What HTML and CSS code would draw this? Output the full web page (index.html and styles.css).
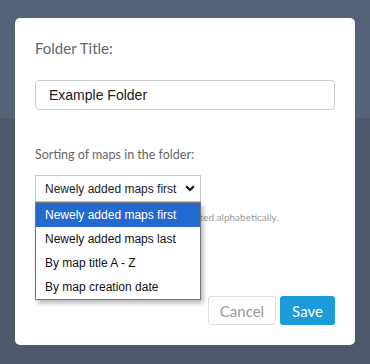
FILE: index.html
```html
<!DOCTYPE html>
<html lang="en">
<head>
    <meta charset="UTF-8">
    <meta name="viewport" content="width=device-width, initial-scale=1.0">
    <title>Edit Folder</title>
    <link rel="stylesheet" href="styles.css">
</head>
<body>
    <div class="modal">
        <label class="field-label" for="folderTitle">Folder Title:</label>
        <input type="text" id="folderTitle" class="text-input" value="Example Folder">

        <div class="field-label sort-label">Sorting of maps in the folder:</div>
        <div class="select-wrap">
            <div class="select-box">
                <span>Newely added maps first</span>
                <svg class="chevron" width="10" height="7" viewBox="0 0 10 7">
                    <polyline points="1.2,1.2 5,5 8.8,1.2" fill="none" stroke="#111" stroke-width="2.2"/>
                </svg>
            </div>
            <ul class="options">
                <li class="selected">Newely added maps first</li>
                <li>Newely added maps last</li>
                <li>By map title A - Z</li>
                <li>By map creation date</li>
            </ul>
        </div>
        <p class="hint">Subfolders are always shown first, sorted alphabetically.</p>

        <div class="actions">
            <button type="button" class="btn btn-cancel">Cancel</button>
            <button type="button" class="btn btn-save">Save</button>
        </div>
    </div>
</body>
</html>
```

FILE: styles.css
```css
body {
    margin: 0;
    height: 364px;
    overflow: hidden;
    background: linear-gradient(#566277 0, #566277 118px, #4d586a 118px);
    font-family: "Liberation Sans", Arial, sans-serif;
}
.modal {
    box-sizing: border-box;
    width: 340px;
    height: 327px;
    margin: 18px 15px 0;
    padding: 20px 20px 20px;
    background-color: #fff;
    border-radius: 5px;
    display: flex;
    flex-direction: column;
}
.field-label {
    display: block;
    font-family: Lato, "Open Sans", sans-serif;
    font-size: 15px;
    line-height: 20px;
    color: #666;
}
.text-input {
    box-sizing: border-box;
    width: 300px;
    height: 30px;
    margin-top: 22px;
    padding: 0 13px;
    border: 1px solid #ccc;
    border-radius: 4px;
    font-family: "Liberation Sans", Arial, sans-serif;
    font-size: 14px;
    color: #222;
    outline: none;
}
.sort-label {
    margin-top: 36px;
    font-size: 12.5px;
    line-height: 18px;
}
.select-wrap {
    position: relative;
    width: 166px;
    margin-top: 11px;
}
.select-box {
    box-sizing: border-box;
    height: 27px;
    padding: 0 5px 0 9px;
    border: 1px solid #c8c8c8;
    display: flex;
    align-items: center;
    justify-content: space-between;
    font-size: 12px;
    white-space: nowrap;
    color: #222;
}
.options {
    position: absolute;
    top: 27px;
    left: 0;
    width: 166px;
    box-sizing: border-box;
    margin: 0;
    padding: 0;
    list-style: none;
    background-color: #fff;
    border: 1px solid #767676;
    box-shadow: 2px 3px 5px rgba(0, 0, 0, 0.3);
    z-index: 2;
}
.options li {
    height: 24px;
    line-height: 24px;
    padding-left: 9px;
    font-size: 12px;
    white-space: nowrap;
    color: #111;
}
.options li.selected {
    background-color: #2369d0;
    color: #fff;
}
.hint {
    margin: 9px 0 0;
    font-family: Lato, "Open Sans", sans-serif;
    font-size: 10px;
    line-height: 12px;
    color: #999;
}
.actions {
    margin-top: auto;
    display: flex;
    justify-content: flex-end;
    gap: 4px;
}
.btn {
    box-sizing: border-box;
    height: 29px;
    border-radius: 3px;
    font-family: Lato, "Open Sans", sans-serif;
    font-size: 15px;
    cursor: pointer;
}
.btn-cancel {
    width: 68px;
    background-color: #fff;
    border: 1px solid #ddd;
    color: #999;
}
.btn-save {
    width: 55px;
    background-color: #1b9bd9;
    border: none;
    color: #fff;
}
```
